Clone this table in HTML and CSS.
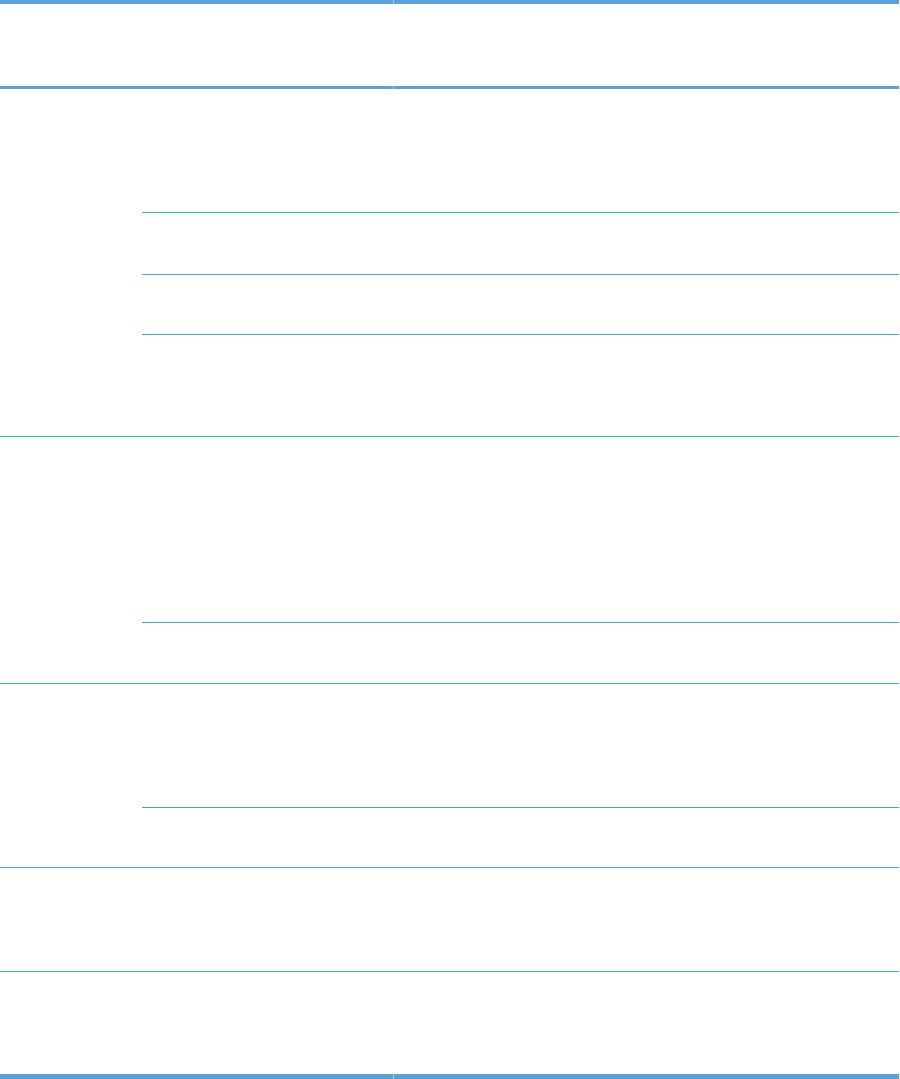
FILE: index.html
```html
<!DOCTYPE html>
<html lang="en">
<head>
  <meta charset="UTF-8">
  <title>Table</title>
  <link rel="stylesheet" href="styles.css">
</head>
<body>
  <div class="table">
    <div class="head">
      <div class="head-cell first"></div>
      <div class="head-cell"></div>
    </div>

    <div class="group">
      <div class="label"></div>
      <div class="rows">
        <div class="row h124"></div>
        <div class="row h62"></div>
        <div class="row h60"></div>
        <div class="row h101"></div>
      </div>
    </div>

    <div class="group">
      <div class="label"></div>
      <div class="rows">
        <div class="row h186"></div>
        <div class="row h60"></div>
      </div>
    </div>

    <div class="group">
      <div class="label"></div>
      <div class="rows">
        <div class="row h124"></div>
        <div class="row h59"></div>
      </div>
    </div>

    <div class="group">
      <div class="label"></div>
      <div class="rows">
        <div class="row h103"></div>
      </div>
    </div>

    <div class="group last">
      <div class="label"></div>
      <div class="rows">
        <div class="row h102"></div>
      </div>
    </div>

    <div class="foot">
      <div class="foot-cell first"></div>
      <div class="foot-cell"></div>
    </div>
  </div>
</body>
</html>
```

FILE: styles.css
```css
body {
  margin: 0;
  background: #ffffff;
  font-family: "Liberation Sans", Arial, sans-serif;
}

.table {
  width: 899px;
}

/* light seam between the two header cells shows only inside the bars */
.head {
  display: flex;
  gap: 1px;
  height: 89px;
  background:
    linear-gradient(#a9cdea, #a9cdea) top / 100% 4px no-repeat,
    linear-gradient(#a9cdea, #a9cdea) bottom / 100% 3px no-repeat,
    #ffffff;
}

.head-cell {
  flex: 1;
  box-sizing: border-box;
  border-top: 4px solid #5aa2d5;
  border-bottom: 3px solid #5aa2d5;
  background: #ffffff;
}

.head-cell.first,
.foot-cell.first {
  flex: 0 0 393px;
}

.group {
  display: flex;
  border-bottom: 1px solid #4c9fd9;
}

.group.last {
  border-bottom: none;
}

.label {
  width: 142px;
  flex: 0 0 142px;
}

.rows {
  flex: 1;
}

.row {
  box-sizing: border-box;
  border-bottom: 1px solid #4c9fd9;
}

.row:last-child {
  border-bottom: none;
}

.h59 { height: 59px; }
.h60 { height: 60px; }
.h62 { height: 62px; }
.h101 { height: 101px; }
.h102 { height: 102px; }
.h103 { height: 103px; }
.h124 { height: 124px; }
.h186 { height: 186px; }

.foot {
  display: flex;
  gap: 1px;
  background: #a9cdea;
  height: 5px;
}

.foot-cell {
  flex: 1;
  background: #5aa2d5;
}
```
